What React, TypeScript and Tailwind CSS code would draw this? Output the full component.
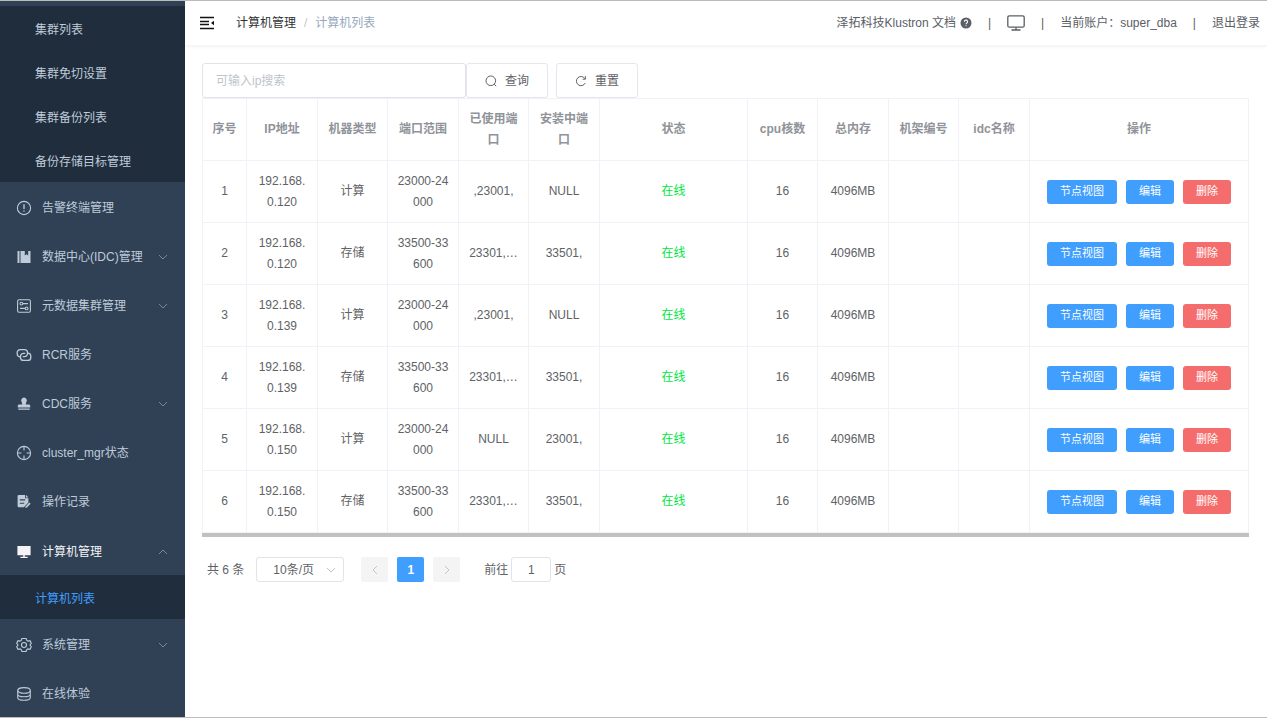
import type { ReactNode } from 'react'

type MenuItem = {
  label: string
  icon: ReactNode
  arrow?: 'up' | 'down'
  active?: boolean
  children?: string[]
}

const iconProps = {
  viewBox: '0 0 16 16',
  className: 'h-4 w-4 shrink-0',
  fill: 'none',
  stroke: 'currentColor',
  strokeWidth: 1.1,
}

const clusterLinks = ['集群列表', '集群免切设置', '集群备份列表', '备份存储目标管理']

const menu: MenuItem[] = [
  {
    label: '告警终端管理',
    icon: (
      <svg {...iconProps}>
        <circle cx="8" cy="8" r="6.6" />
        <path d="M8 4.2v4.9M8 10.4v1.3" strokeWidth="1.3" />
      </svg>
    ),
  },
  {
    label: '数据中心(IDC)管理',
    arrow: 'down',
    icon: (
      <svg {...iconProps} fill="currentColor" stroke="none">
        <path d="M1.5 2h2v12h-2zM4.5 2h4.3v4.6l1.7-1.4 1.7 1.4V2h2.3v12h-10z" />
      </svg>
    ),
  },
  {
    label: '元数据集群管理',
    arrow: 'down',
    icon: (
      <svg {...iconProps}>
        <rect x="1.6" y="1.8" width="12.8" height="12.4" rx="1.4" />
        <circle cx="5.4" cy="5.6" r="1.4" />
        <circle cx="10.6" cy="10.4" r="1.4" />
        <path d="M6.8 5.6H12M4 10.4h5.2" />
      </svg>
    ),
  },
  {
    label: 'RCR服务',
    icon: (
      <svg {...iconProps} strokeWidth="1.3">
        <path d="M4.2 9.8A3 3 0 0 1 1.2 7V5.6a3 3 0 0 1 3-3h4.3a3 3 0 0 1 3 3v1a3 3 0 0 1-3 3H6.8" />
        <path d="M11.8 6.2a3 3 0 0 1 3 2.8v1.4a3 3 0 0 1-3 3H7.5a3 3 0 0 1-3-3v-1a3 3 0 0 1 3-3h1.7" />
      </svg>
    ),
  },
  {
    label: 'CDC服务',
    arrow: 'down',
    icon: (
      <svg {...iconProps} fill="currentColor" stroke="none">
        <path d="M8 1.6a2.9 2.9 0 0 1 2.3 4.6c-.5.8-.6 1.6-.5 2.4h3c.9 0 1.4.6 1.4 1.4v1.5H1.8V10c0-.8.5-1.4 1.4-1.4h3c.1-.8 0-1.6-.5-2.4A2.9 2.9 0 0 1 8 1.6zM2.3 12.5h11.4v1.3H2.3z" />
      </svg>
    ),
  },
  {
    label: 'cluster_mgr状态',
    icon: (
      <svg {...iconProps}>
        <circle cx="8" cy="8" r="6.6" />
        <path d="M8 1.4v4M8 10.6v4M1.4 8h4M10.6 8h4" />
      </svg>
    ),
  },
  {
    label: '操作记录',
    icon: (
      <svg {...iconProps} fill="currentColor" stroke="none">
        <path
          fillRule="evenodd"
          d="M2.8 1h6.4v3.2h3.2v4.2l-4.6 4.8H2.8A1.2 1.2 0 0 1 1.6 12V2.2A1.2 1.2 0 0 1 2.8 1zm1 4.3v1.1h5.4V5.3zm0 3.4v1.1h4.4V8.7z"
        />
        <path d="M10 1l2.4 2.4H10zM13.3 8.6l1.3 1.2-3.6 3.8-1.8.5.4-1.7z" />
      </svg>
    ),
  },
  {
    label: '计算机管理',
    arrow: 'up',
    active: true,
    icon: (
      <svg {...iconProps} fill="currentColor" stroke="none">
        <path d="M1.4 2h13.2v9.2H1.4zM7.2 11.2h1.6v1.6h2.8V14H4.4v-1.2h2.8z" />
      </svg>
    ),
    children: ['计算机列表'],
  },
  {
    label: '系统管理',
    arrow: 'down',
    icon: (
      <svg {...iconProps}>
        <path d="M5.9 1.5h4.2l.7 1.9 1.2.7 2-.4 1.3 2.5-1.3 1.8 1.3 1.8-1.3 2.5-2-.4-1.2.7-.7 1.9H5.9l-.7-1.9-1.2-.7-2 .4L.7 9.8 2 8 .7 6.2 2 3.7l2 .4 1.2-.7z" />
        <circle cx="8" cy="8" r="2.5" />
      </svg>
    ),
  },
  {
    label: '在线体验',
    icon: (
      <svg {...iconProps}>
        <ellipse cx="8" cy="4.4" rx="6.3" ry="2.8" />
        <path d="M1.7 4.4v7c0 1.6 2.8 2.8 6.3 2.8s6.3-1.2 6.3-2.8v-7M1.7 7.9c0 1.6 2.8 2.8 6.3 2.8s6.3-1.2 6.3-2.8" />
      </svg>
    ),
  },
]

const columns = [
  { title: '序号', width: 'w-11' },
  { title: 'IP地址', width: 'w-[71px]' },
  { title: '机器类型', width: 'w-[70px]' },
  { title: '端口范围', width: 'w-[71px]' },
  { title: '已使用端口', width: 'w-[70px]' },
  { title: '安装中端口', width: 'w-[71px]' },
  { title: '状态', width: '' },
  { title: 'cpu核数', width: 'w-[70px]' },
  { title: '总内存', width: 'w-[71px]' },
  { title: '机架编号', width: 'w-[70px]' },
  { title: 'idc名称', width: 'w-[71px]' },
  { title: '操作', width: 'w-[219px]' },
]

const machines = [
  { ip: '192.168.0.120', type: '计算', range: '23000-24000', used: ',23001,', pending: 'NULL' },
  { ip: '192.168.0.120', type: '存储', range: '33500-33600', used: '23301,…', pending: '33501,' },
  { ip: '192.168.0.139', type: '计算', range: '23000-24000', used: ',23001,', pending: 'NULL' },
  { ip: '192.168.0.139', type: '存储', range: '33500-33600', used: '23301,…', pending: '33501,' },
  { ip: '192.168.0.150', type: '计算', range: '23000-24000', used: 'NULL', pending: '23001,' },
  { ip: '192.168.0.150', type: '存储', range: '33500-33600', used: '23301,…', pending: '33501,' },
]

function Chevron({ d, className }: { d: string; className: string }) {
  return (
    <svg viewBox="0 0 10 10" className={className} fill="none" stroke="currentColor">
      <path d={d} />
    </svg>
  )
}

function Sidebar() {
  return (
    <aside className="flex w-[185px] shrink-0 flex-col bg-[#304156] pt-[5px] text-[#bfcbd9]">
      <nav className="flex flex-1 flex-col">
        <div className="bg-[#1f2d3d]">
          {clusterLinks.map((label) => (
            <a key={label} href="#" className="flex h-11 items-center pt-1 pl-[35px]">
              {label}
            </a>
          ))}
        </div>
        {menu.map((item) => (
          <div key={item.label} className={item.children ? 'flex flex-col' : 'flex min-h-[49px] flex-1 flex-col'}>
            <a
              href="#"
              className={`flex flex-1 items-center pt-[3px] pr-[17px] pl-4 ${item.active ? 'min-h-[50px] text-[#f4f4f5]' : 'min-h-[49px]'}`}
            >
              {item.icon}
              <span className="ml-2.5 flex-1">{item.label}</span>
              {item.arrow && (
                <Chevron
                  d={item.arrow === 'down' ? 'M1 3l4 4 4-4' : 'M1 7l4-4 4 4'}
                  className="h-2.5 w-2.5 text-[#7d8896]"
                />
              )}
            </a>
            {item.children?.map((child) => (
              <a key={child} href="#" className="flex h-11 items-center bg-[#1f2d3d] pt-1 pl-[35px] text-[#409eff]">
                {child}
              </a>
            ))}
          </div>
        ))}
      </nav>
    </aside>
  )
}

function Navbar() {
  return (
    <header className="flex h-11 items-center justify-between pr-[7px] pl-[15px] text-[#5a5e66] shadow-[0_1px_4px_rgba(0,21,41,0.08)]">
      <div className="flex items-center">
        <button type="button" aria-label="折叠菜单">
          <svg viewBox="0 0 14 14" className="h-3.5 w-3.5" fill="none" stroke="#111" strokeWidth="1.3">
            <path d="M0 1.5h14M0 5.5h9M0 8.5h9M0 12.5h14" />
            <path d="M14 4.8v4.4L11 7z" fill="#111" stroke="none" />
          </svg>
        </button>
        <nav className="ml-[22px] flex items-center">
          <a href="#" className="text-[#303133]">计算机管理</a>
          <span className="mx-2 text-[#c0c4cc]">/</span>
          <span className="text-[#97a8be]">计算机列表</span>
        </nav>
      </div>
      <div className="flex items-center">
        <a href="#" className="flex items-center gap-1">
          泽拓科技Klustron 文档
          <svg viewBox="0 0 12 12" className="h-3 w-3">
            <circle cx="6" cy="6" r="5.5" fill="#5a5e66" />
            <path d="M4.4 4.8a1.6 1.6 0 1 1 2.4 1.3c-.6.3-.8.5-.8 1.1M6 8.2v1.1" fill="none" stroke="#fff" strokeWidth="1.1" />
          </svg>
        </a>
        <span className="mx-4">|</span>
        <svg viewBox="0 0 18 16" className="h-4 w-[18px]" fill="none" stroke="#5a5e66" strokeWidth="1.3">
          <rect x="0.8" y="0.8" width="16.4" height="11.4" rx="1.5" />
          <path d="M9 12.2v2.8M4.5 15h9" />
        </svg>
        <span className="mx-4">|</span>
        <span>当前账户：super_dba</span>
        <span className="mx-4">|</span>
        <button type="button">退出登录</button>
      </div>
    </header>
  )
}

function SearchBar() {
  const button =
    'flex h-[35px] w-[82px] items-center justify-center gap-2 rounded-[3px] border border-[#e4e7ed] text-[#606266]'
  return (
    <form className="flex" onSubmit={(e) => e.preventDefault()}>
      <input
        type="text"
        aria-label="ip搜索"
        placeholder="可输入ip搜索"
        className="h-[35px] w-[264px] rounded-[3px] border border-[#e0e3e9] px-[13px] placeholder:text-[#c0c4cc]"
      />
      <button type="submit" className={button}>
        <svg viewBox="0 0 12 12" className="h-3 w-3" fill="none" stroke="currentColor">
          <circle cx="5.8" cy="5.8" r="4.8" />
          <path d="M9.2 9.2l2 2" />
        </svg>
        查询
      </button>
      <button type="button" className={`ml-2 ${button}`}>
        <svg viewBox="0 0 12 12" className="h-3 w-3" fill="none" stroke="currentColor">
          <path d="M10.2 8A4.6 4.6 0 1 1 10 3.8M10.4 1.2v3H7.6" />
        </svg>
        重置
      </button>
    </form>
  )
}

function MachineTable() {
  const action = 'h-6 rounded-[3px] px-[13px] text-[11px] text-white'
  const cell = 'border-r border-b border-[#f0f2f7] px-2 leading-[21px] break-all'
  return (
    <div className="border-b-4 border-[#c1c1c1]">
      <table className="w-full table-fixed border-separate border-spacing-0 border-t border-l border-[#f0f2f7] text-center text-[#606266]">
        <thead>
          <tr className="h-[62px] text-[#909399]">
            {columns.map((col) => (
              <th key={col.title} scope="col" className={`${cell} ${col.width} font-bold`}>
                {col.title}
              </th>
            ))}
          </tr>
        </thead>
        <tbody>
          {machines.map((m, i) => (
            <tr key={i} className="h-[62px]">
              <td className={cell}>{i + 1}</td>
              <td className={cell}>{m.ip}</td>
              <td className={cell}>{m.type}</td>
              <td className={cell}>{m.range}</td>
              <td className={cell}>{m.used}</td>
              <td className={cell}>{m.pending}</td>
              <td className={`${cell} text-[#00e640]`}>在线</td>
              <td className={cell}>16</td>
              <td className={cell}>4096MB</td>
              <td className={cell} />
              <td className={cell} />
              <td className={cell}>
                <div className="flex justify-center gap-[9px]">
                  <button type="button" className={`${action} bg-[#409eff]`}>节点视图</button>
                  <button type="button" className={`${action} bg-[#409eff]`}>编辑</button>
                  <button type="button" className={`${action} bg-[#f56c6c]`}>删除</button>
                </div>
              </td>
            </tr>
          ))}
        </tbody>
      </table>
    </div>
  )
}

function Pagination() {
  const pager = 'flex h-[25px] w-[27px] items-center justify-center rounded-[2px]'
  return (
    <div className="mt-5 flex items-center pl-[5px] text-[#606266]">
      <span>共 6 条</span>
      <div className="relative ml-3">
        <select
          aria-label="每页条数"
          className="h-[25px] w-[88px] appearance-none rounded-[3px] border border-[#e0e3e9] bg-white pl-4"
        >
          <option>10条/页</option>
        </select>
        <Chevron d="M1 3l4 4 4-4" className="pointer-events-none absolute top-2 right-2 h-2.5 w-2.5 text-[#c0c4cc]" />
      </div>
      <div className="ml-[17px] flex gap-[9px]">
        <button type="button" aria-label="上一页" disabled className={`${pager} bg-[#f4f4f5] text-[#c0c4cc]`}>
          <Chevron d="M7 1L3 5l4 4" className="h-2.5 w-2.5" />
        </button>
        <button type="button" className={`${pager} bg-[#409eff] font-bold text-white`}>1</button>
        <button type="button" aria-label="下一页" disabled className={`${pager} bg-[#f4f4f5] text-[#c0c4cc]`}>
          <Chevron d="M3 1l4 4-4 4" className="h-2.5 w-2.5" />
        </button>
      </div>
      <label className="ml-6 flex items-center gap-[3px]">
        前往
        <input
          type="text"
          defaultValue="1"
          className="h-[25px] w-10 rounded-[3px] border border-[#e0e3e9] text-center"
        />
        页
      </label>
    </div>
  )
}

export default function App() {
  return (
    <div className="flex min-h-screen border-y border-[#bdbdbd] bg-white font-['Liberation_Sans','Noto_Sans_CJK_SC',sans-serif] text-xs">
      <Sidebar />
      <div className="min-w-0 flex-1">
        <Navbar />
        <main className="pt-[18px] pr-[18px] pl-[17px]">
          <SearchBar />
          <MachineTable />
          <Pagination />
        </main>
      </div>
    </div>
  )
}
